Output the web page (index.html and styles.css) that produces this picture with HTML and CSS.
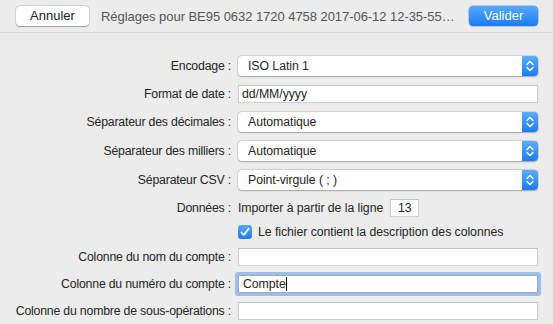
FILE: index.html
```html
<!DOCTYPE html>
<html lang="fr">
<head>
<meta charset="utf-8">
<link rel="stylesheet" href="styles.css">
</head>
<body>
<div class="toolbar">
  <button class="btn btn-cancel">Annuler</button>
  <div class="title">Réglages pour BE95 0632 1720 4758 2017-06-12 12-35-55…</div>
  <button class="btn btn-ok">Valider</button>
</div>
<div class="form">
  <div class="row">
    <div class="label">Encodage :</div>
    <div class="popup"><span class="ptext">ISO Latin 1</span><span class="stepper"><svg width="16" height="20" viewBox="0 0 16 20"><path d="M5 8.5 L8 5.5 L11 8.5 M5 11.5 L8 14.5 L11 11.5" fill="none" stroke="#fff" stroke-width="1.4" stroke-linecap="round" stroke-linejoin="round"/></svg></span></div>
  </div>
  <div class="row">
    <div class="label">Format de date :</div>
    <div class="field">dd/MM/yyyy</div>
  </div>
  <div class="row">
    <div class="label">Séparateur des décimales :</div>
    <div class="popup"><span class="ptext">Automatique</span><span class="stepper"><svg width="16" height="20" viewBox="0 0 16 20"><path d="M5 8.5 L8 5.5 L11 8.5 M5 11.5 L8 14.5 L11 11.5" fill="none" stroke="#fff" stroke-width="1.4" stroke-linecap="round" stroke-linejoin="round"/></svg></span></div>
  </div>
  <div class="row">
    <div class="label">Séparateur des milliers :</div>
    <div class="popup"><span class="ptext">Automatique</span><span class="stepper"><svg width="16" height="20" viewBox="0 0 16 20"><path d="M5 8.5 L8 5.5 L11 8.5 M5 11.5 L8 14.5 L11 11.5" fill="none" stroke="#fff" stroke-width="1.4" stroke-linecap="round" stroke-linejoin="round"/></svg></span></div>
  </div>
  <div class="row">
    <div class="label">Séparateur CSV :</div>
    <div class="popup"><span class="ptext">Point-virgule ( ; )</span><span class="stepper"><svg width="16" height="20" viewBox="0 0 16 20"><path d="M5 8.5 L8 5.5 L11 8.5 M5 11.5 L8 14.5 L11 11.5" fill="none" stroke="#fff" stroke-width="1.4" stroke-linecap="round" stroke-linejoin="round"/></svg></span></div>
  </div>
  <div class="row">
    <div class="label">Données :</div>
    <div class="inline">
      <span class="plain">Importer à partir de la ligne</span>
      <div class="field small">13</div>
    </div>
  </div>
  <div class="row row-check">
    <div class="label"></div>
    <div class="inline">
      <span class="check"><svg width="14" height="14" viewBox="0 0 14 14"><path d="M3.4 7.4 L5.9 10 L10.6 3.8" fill="none" stroke="#fff" stroke-width="1.7" stroke-linecap="round" stroke-linejoin="round"/></svg></span>
      <span class="plain">Le fichier contient la description des colonnes</span>
    </div>
  </div>
  <div class="row">
    <div class="label">Colonne du nom du compte :</div>
    <div class="field"></div>
  </div>
  <div class="row">
    <div class="label">Colonne du numéro du compte :</div>
    <div class="field focus">Compte<span class="caret"></span></div>
  </div>
  <div class="row">
    <div class="label">Colonne du nombre de sous-opérations :</div>
    <div class="field"></div>
  </div>
</div>
</body>
</html>
```
FILE: styles.css
```css
html, body {
  margin: 0;
  padding: 0;
  background: #ececec;
  font-family: "Liberation Sans", Arial, sans-serif;
  font-size: 12.3px;
  letter-spacing: -0.06px;
  color: #262626;
  overflow: hidden;
}
.toolbar {
  height: 33px;
  box-sizing: border-box;
  border-bottom: 1px solid #d4d4d4;
  display: flex;
  align-items: center;
  padding: 0 15px 0 16px;
  gap: 12px;
}
.btn {
  font-family: inherit;
  font-size: 13px;
  letter-spacing: 0;
  height: 20px;
  border-radius: 4px;
  padding: 0;
  margin-top: -1px;
}
.btn-cancel {
  width: 73px;
  background: #fff;
  color: #222;
  border: none;
  box-shadow: 0 0 0 0.5px rgba(0,0,0,0.18), 0 0.5px 1px rgba(0,0,0,0.25);
}
.btn-ok {
  width: 69px;
  margin-left: auto;
  color: #fff;
  border: none;
  background: linear-gradient(#57a9fc, #1b7cf6);
  box-shadow: 0 0 0 0.5px rgba(20,90,200,0.5);
}
.title {
  color: #555;
  white-space: nowrap;
  font-size: 13px;
  letter-spacing: -0.05px;
}
.form {
  display: flex;
  flex-direction: column;
  gap: 9px;
  padding-top: 23px;
}
.row {
  display: flex;
  align-items: center;
}
.row-check {
  margin-top: -1px;
  height: 14px;
}
.label {
  width: 231px;
  flex: none;
  text-align: right;
  padding-right: 7px;
  box-sizing: content-box;
  white-space: nowrap;
  letter-spacing: -0.2px;
}
.popup {
  width: 300px;
  height: 20px;
  box-sizing: border-box;
  background: #fff;
  border-radius: 4px;
  box-shadow: 0 0 0 0.5px rgba(0,0,0,0.15), 0 0.5px 1.5px rgba(0,0,0,0.25);
  display: flex;
  align-items: center;
  justify-content: space-between;
}
.ptext {
  padding-left: 10px;
}
.stepper {
  width: 16px;
  height: 20px;
  border-radius: 0 4px 4px 0;
  background: linear-gradient(#5dacfc, #1a7cf5);
  display: flex;
}
.field {
  width: 300px;
  height: 18px;
  box-sizing: border-box;
  background: #fff;
  border: 1px solid #cfcfcf;
  border-top-color: #c4c4c4;
  padding-left: 3px;
  line-height: 16px;
  display: flex;
  align-items: center;
}
.field.small {
  width: 29px;
  justify-content: center;
  padding-left: 0;
}
.field.focus {
  border-color: #a9a9a9;
  box-shadow: 0 0 0 3px #98c1f2;
  border-radius: 1px;
  padding-left: 4px;
}
.caret {
  display: inline-block;
  width: 1px;
  height: 14px;
  background: #000;
}
.inline {
  display: flex;
  align-items: center;
  gap: 7px;
}
.plain {
  white-space: nowrap;
}
.check {
  width: 14px;
  height: 14px;
  border-radius: 3px;
  background: linear-gradient(#56a8fb, #1c7ef5);
  display: flex;
  margin-right: -1px;
}
```
